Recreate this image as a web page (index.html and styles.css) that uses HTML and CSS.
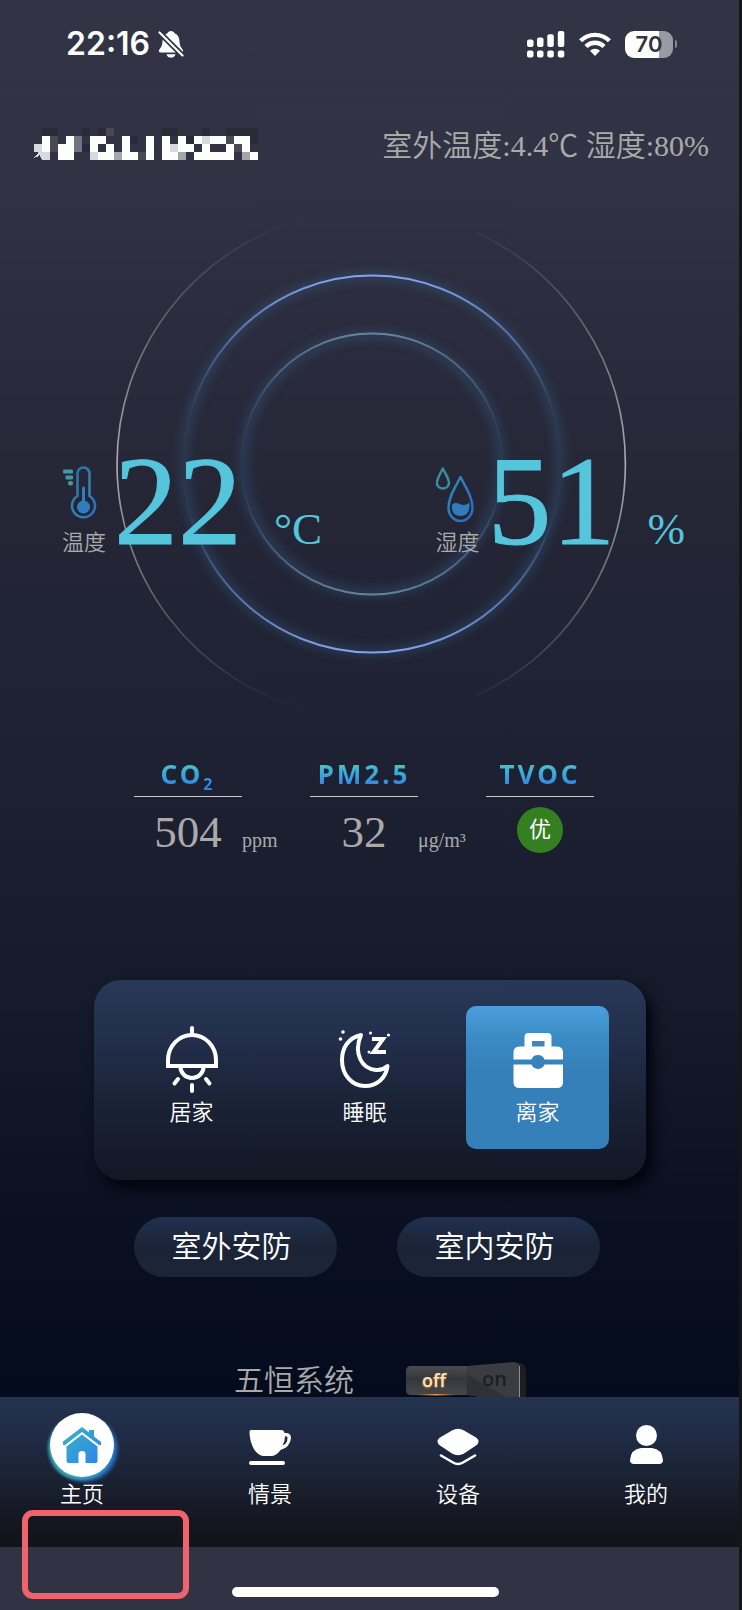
FILE: index.html
```html
<!DOCTYPE html>
<html lang="zh-CN">
<head>
<meta charset="utf-8">
<meta name="viewport" content="width=device-width, initial-scale=1">
<title>主页</title>
<link rel="stylesheet" href="styles.css">
</head>
<body>
<div class="app">
  <div class="status">
    <div class="status-left">
      <span class="clock">22:16</span>
      <svg class="bell" viewBox="0 0 26 28" aria-hidden="true">
        <path fill="#fff" d="M13 1C11 1 10 2 9.500 3.200C6.500 4.200 4.800 7 4.600 10.500C4.400 15 3.500 17 1.500 19.200C.2 20.800.8 22.500 2.800 22.500H23C25.200 22.500 25.700 20.800 24.400 19.200C22.500 17 21.600 15 21.400 10.500C21.200 7 19.500 4.200 16.500 3.200C16 2 15 1 13 1ZM8.500 24.200H17.500C17 26.500 15.300 27.600 13 27.600C10.700 27.600 9 26.500 8.500 24.200Z"/>
        <path stroke="#313344" stroke-width="5.500" d="M0 1L26 27"/>
        <path stroke="#fff" stroke-width="2.200" stroke-linecap="round" d="M1.500 2.500L24.500 25.500"/>
      </svg>
    </div>
    <div class="status-right">
      <svg class="signal" viewBox="0 0 38 28" fill="#fff" aria-hidden="true">
        <rect x="0" y="9.500" width="6.500" height="7.500" rx="2"/><rect x="10" y="7.500" width="6.500" height="9.500" rx="2"/><rect x="20.300" y="4.300" width="6.500" height="12.700" rx="2"/><rect x="30.800" y="1" width="6.500" height="16" rx="2"/>
        <rect x="0" y="20.500" width="6.500" height="7" rx="2"/><rect x="10" y="20.500" width="6.500" height="7" rx="2"/><rect x="20.300" y="20.500" width="6.500" height="7" rx="2"/><rect x="30.800" y="20.500" width="6.500" height="7" rx="2"/>
      </svg>
      <svg class="wifi" viewBox="0 0 32 26" aria-hidden="true">
        <g fill="none" stroke="#fff" stroke-width="4.400"><path d="M1.600 9.800A20.500 20.500 0 0 1 30.400 9.800"/><path d="M7 15.500A12.800 12.800 0 0 1 25 15.500"/></g>
        <path fill="#fff" d="M11 19.800A7 7 0 0 1 21 19.800L16 25Z"/>
      </svg>
      <div class="battery"><span class="battery-cell">70</span><span class="battery-tip"></span></div>
    </div>
  </div>

  <header class="header">
    <svg class="name" viewBox="0 0 225 32" shape-rendering="crispEdges" aria-hidden="true">
      <g fill="#292c36"><path d="M9 0h16v8h-16zM49 0h8v8h-8zM65 0h8v8h-8zM129 0h16v8h-16zM169 0h8v8h-8zM193 0h32v8h-32zM217 8h8v8h-8zM153 8h8v8h-8z"/></g>
      <g fill="#292942"><path d="M49 16h8v8h-8zM97 8h8v8h-8z"/></g>
      <g fill="#4a4853"><path d="M17 8h8v8h-8zM17 16h8v8h-8zM73 0h8v8h-8zM105 24h8v8h-8zM193 8h8v8h-8zM201 16h8v8h-8z"/></g>
      <g fill="#747380"><path d="M41 8h8v8h-8zM41 16h8v8h-8z"/></g>
      <g fill="#a5a5aa"><path d="M81 24h8v8h-8zM145 24h8v8h-8zM209 24h8v8h-8z"/></g>
      <g fill="#d8d9df"><path d="M1 16h8v8h-8zM5 24h12v8h-8zM0 30L6 24V28ZM57 24h8v8h-8zM137 16h8v8h-8zM169 8h8v8h-8z"/></g>
      <g fill="#fdfdfb"><path d="M9 8h8v16h-8zM33 8h8v8h-8zM25 16h16v16h-16zM57 8h16v8h-16zM57 16h8v8h-8zM73 16h8v8h-8zM65 24h16v8h-16zM89 8h8v16h-8zM89 24h16v8h-16zM113 8h8v24h-8zM129 8h8v24h-8zM137 24h8v8h-8zM145 8h8v8h-8zM145 16h16v8h-16zM161 8h8v8h-8zM169 16h8v8h-8zM177 8h16v8h-16zM161 24h40v8h-40zM193 16h8v8h-8zM201 8h16v8h-16zM209 16h8v8h-8zM217 24h8v8h-8z"/></g>
    </svg>
    <p class="outdoor">室外温度:4.4℃ 湿度:80%</p>
  </header>

  <main class="main">
    <section class="hero">
      <svg class="rings" viewBox="-256 -256 512 512" aria-hidden="true">
        <defs>
          <linearGradient id="outerLeft" gradientUnits="userSpaceOnUse" x1="0" y1="-246" x2="0" y2="246">
            <stop offset="0" stop-color="#aaa" stop-opacity="0"/><stop offset=".5" stop-color="#aeaeb2"/><stop offset="1" stop-color="#aaa" stop-opacity="0"/>
          </linearGradient>
          <linearGradient id="middle" x1="0" y1="0" x2="0" y2="1">
            <stop offset="0" stop-color="#86a2ea"/><stop offset=".2" stop-color="#5578b4" stop-opacity=".7"/><stop offset=".36" stop-color="#38577c" stop-opacity=".2"/><stop offset=".5" stop-color="#38577c" stop-opacity="0"/><stop offset=".64" stop-color="#38577c" stop-opacity=".2"/><stop offset=".8" stop-color="#5578b4" stop-opacity=".7"/><stop offset="1" stop-color="#86a2ea"/>
          </linearGradient>
          <linearGradient id="inner" x1="0" y1="0" x2="0" y2="1">
            <stop offset="0" stop-color="#66839e"/><stop offset=".35" stop-color="#38577c" stop-opacity=".3"/><stop offset=".5" stop-color="#38577c" stop-opacity="0"/><stop offset=".65" stop-color="#38577c" stop-opacity=".3"/><stop offset="1" stop-color="#66839e"/>
          </linearGradient>
          <filter id="glow" x="-20%" y="-20%" width="140%" height="140%"><feGaussianBlur stdDeviation="5"/></filter>
        </defs>
        <g fill="none">
          <g stroke="#36618a" stroke-width="10" opacity=".34" filter="url(#glow)"><circle r="188"/><circle r="129"/></g>
          <path stroke="url(#outerLeft)" stroke-width="1.600" d="M-68 -245A254 254 0 0 0 -68 245M105 -231A254 254 0 0 1 105 231"/>
          <circle r="188.500" stroke="url(#middle)" stroke-width="2"/>
          <circle r="130.500" stroke="url(#inner)" stroke-width="2"/>
        </g>
      </svg>
      <div class="readings">
        <div class="reading">
          <div class="reading-kind">
            <svg class="kind-icon" viewBox="0 0 46 57" aria-hidden="true">
              <defs><linearGradient id="thermo" x1="0" y1="0" x2="1" y2="1"><stop offset="0" stop-color="#2e6ba6"/><stop offset=".6" stop-color="#2f86b8"/><stop offset="1" stop-color="#2d69c4"/></linearGradient></defs>
              <g fill="#3f9aa5"><rect x="1" y="3.500" width="10" height="4" rx="1.200"/><rect x="3.500" y="9.500" width="7.500" height="4" rx="1.200"/><rect x="6" y="15" width="5" height="4.500" rx="2"/></g>
              <path fill="none" stroke="url(#thermo)" stroke-width="2.500" d="M15.500 30V7.500A6 6 0 0 1 27.500 7.500V30A11.500 11.500 0 1 1 15.500 30Z"/>
              <path fill="none" stroke="#2f7dba" stroke-width="3" stroke-linecap="round" d="M21.500 22V40"/>
              <circle cx="21.500" cy="41" r="6.500" fill="#2f7dba"/>
            </svg>
            <span class="kind-label">温度</span>
          </div>
          <p class="reading-value"><span class="digits">22</span><span class="unit">°C</span></p>
        </div>
        <div class="reading">
          <div class="reading-kind">
            <svg class="kind-icon" viewBox="0 0 46 57" aria-hidden="true">
              <defs><linearGradient id="drop" x1="0" y1="0" x2="1" y2="1"><stop offset="0" stop-color="#2f8bb5"/><stop offset="1" stop-color="#2b67c8"/></linearGradient></defs>
              <g fill="none" stroke-width="2.500" stroke-linejoin="round"><path stroke="#388e9e" d="M6.800 2.500C9.500 8 13 12.500 13 17.500A6.200 6.200 0 0 1 .8 17.500C.8 12.500 4.200 8 6.800 2.500Z"/><path stroke="url(#drop)" d="M24.500 11C30 22 36.500 31 36.500 42A12 13 0 0 1 12.500 42C12.500 31 19 22 24.500 11Z"/></g>
              <path fill="#2f7dbb" d="M16 39C19 35.500 22.500 37.500 25 38.500C28 39.500 30.500 39 33.200 36.500C34.500 45 31 50 24.500 50C18.500 50 15.500 46 16 39Z"/>
            </svg>
            <span class="kind-label">湿度</span>
          </div>
          <p class="reading-value"><span class="digits">51</span><span class="unit">%</span></p>
        </div>
      </div>
    </section>

    <section class="metrics">
      <div class="metric">
        <h2 class="metric-name"><span class="metric-text">CO<sub>2</sub></span></h2>
        <span class="metric-value">504</span><span class="metric-unit">ppm</span>
      </div>
      <div class="metric">
        <h2 class="metric-name"><span class="metric-text">PM2.5</span></h2>
        <span class="metric-value">32</span><span class="metric-unit">μg/m³</span>
      </div>
      <div class="metric">
        <h2 class="metric-name"><span class="metric-text">TVOC</span></h2>
        <span class="grade">优</span>
      </div>
    </section>

    <section class="modes">
      <button class="mode" type="button">
        <svg class="mode-icon" viewBox="0 0 60 70" aria-hidden="true">
          <g fill="none" stroke="#fff" stroke-width="4"><path stroke-linecap="round" d="M30 3V9"/><path d="M6 41V35A24 25 0 0 1 54 35V41Z"/><path d="M18.500 42A11.500 11 0 0 0 41.500 42"/><path stroke-linecap="round" d="M16 54L12.500 58.500M44 54L47.500 58.500M30 60V66"/></g>
        </svg>
        <span>居家</span>
      </button>
      <button class="mode" type="button">
        <svg class="mode-icon" viewBox="0 0 60 70" aria-hidden="true">
          <path fill="none" stroke="#fff" stroke-width="4" stroke-linejoin="round" d="M26 10C13 13 7 23 7 35C7 50 17 61 30 61C42 61 51 53 52.500 41C49 44 45 45.500 41 45C27 44 18 29 26 10Z"/>
          <path fill="none" stroke="#fff" stroke-width="4" stroke-linejoin="miter" d="M37 14H48L38.500 27H51"/>
          <g fill="#fff"><circle cx="8" cy="7" r="1.800"/><circle cx="5.500" cy="14" r="1.800"/><circle cx="35.500" cy="8" r="1.500"/><circle cx="53.500" cy="10" r="1.600"/><circle cx="34" cy="27" r="1.500"/></g>
        </svg>
        <span>睡眠</span>
      </button>
      <button class="mode mode-active" type="button" aria-pressed="true">
        <svg class="mode-icon" viewBox="0 0 60 70" aria-hidden="true">
          <path fill="#fff" fill-rule="evenodd" d="M11.500 21.500H16.500V12Q16.500 8 20.500 8H39.500Q43.500 8 43.500 12V21.500H49Q55 21.500 55 27.500V34.500H36.500A7 7 0 0 0 23.500 34.500H5.500V27.500Q5.500 21.500 11.500 21.500ZM24 16V21.500H36.500V16Z"/>
          <path fill="#fff" d="M5.500 39.500H23.500A7 7 0 0 0 36.500 39.500H55V57Q55 63 49 63H11.500Q5.500 63 5.500 57Z"/>
        </svg>
        <span>离家</span>
      </button>
    </section>

    <section class="guards">
      <button class="guard" type="button">室外安防</button>
      <button class="guard" type="button">室内安防</button>
    </section>

    <section class="system">
      <label class="system-name" for="system-switch">五恒系统</label>
      <span class="switch">
        <input class="switch-input" type="checkbox" role="switch" id="system-switch">
        <svg class="switch-body" viewBox="0 0 122 44" aria-hidden="true">
          <defs>
            <linearGradient id="offSide" x1="0" y1="0" x2="0" y2="1"><stop offset="0" stop-color="#494b50"/><stop offset=".45" stop-color="#35373c"/><stop offset="1" stop-color="#45474b"/></linearGradient>
            <linearGradient id="ember"><stop offset="0" stop-color="#c77a34" stop-opacity="0"/><stop offset=".5" stop-color="#e89a50"/><stop offset="1" stop-color="#c77a34" stop-opacity="0"/></linearGradient>
          </defs>
          <path fill="#1c1e22" d="M110 1H116Q121 3 121 10V38H110Z"/>
          <path fill="url(#offSide)" d="M6 4H62V33H6Q1 33 1 28V9Q1 4 6 4Z"/>
          <path fill="#3b3c42" d="M62 4L108 0Q115 0 115 6V40H108L62 33Z"/>
          <path fill="#303137" d="M62 12L106 38L62 33Z"/>
          <path stroke="#8a909a" stroke-width="1" d="M114.500 4V36"/>
          <path fill="url(#ember)" d="M10 32H52V33.500H10Z"/>
        </svg>
        <span class="switch-off">off</span>
        <span class="switch-on">on</span>
      </span>
    </section>
  </main>

  <nav class="tabs">
    <a class="tab" href="#home" aria-current="page">
      <span class="tab-icon tab-disc">
        <svg viewBox="0 0 40 40" aria-hidden="true">
          <defs><linearGradient id="house" x1="0" y1="0" x2="1" y2="1"><stop offset="0" stop-color="#39b5c3"/><stop offset="1" stop-color="#2f83ec"/></linearGradient></defs>
          <path fill="url(#house)" d="M20 2L27 7.500V5H32V11.500L39 17V20H37L20 7L3 20H1V16.500ZM20 9.500L35.500 21.500V36Q35.500 38 33.500 38H23.500V29Q23.500 26 20 26Q16.500 26 16.500 29V38H6.500Q4.500 38 4.500 36V21.500Z"/>
        </svg>
      </span>
      <span>主页</span>
    </a>
    <a class="tab" href="#scene">
      <span class="tab-icon"><svg viewBox="0 0 44 44" aria-hidden="true">
        <path fill="#fff" fill-rule="evenodd" d="M3 7H33Q36 7 36.500 10Q43 9.500 43 15Q42 24.500 32.500 27C30 30.500 27 33 24 33H15C7 32 1.500 20 1.500 8.500Q1.500 7 3 7ZM37 13.500Q37 18.500 34.500 22.500Q39.500 20.500 39.500 15Q39.500 12.500 37 13.500Z"/>
        <rect x="1" y="38" width="36" height="4" rx="2" fill="#fff"/></svg></span>
      <span>情景</span>
    </a>
    <a class="tab" href="#devices">
      <span class="tab-icon"><svg viewBox="0 0 44 44" aria-hidden="true">
        <path fill="#fff" d="M16 7.500Q22 4 28 7.500L40 14.500Q45 18.500 40 22.500L28 30.500Q22 34 16 30.500L4 22.500Q-1 18.500 4 14.500Z"/>
        <path fill="none" stroke="#fff" stroke-width="2.600" stroke-linecap="round" d="M5 32.500L17 39.500Q22 42.500 27 39.500L39 32.500"/></svg></span>
      <span>设备</span>
    </a>
    <a class="tab" href="#mine">
      <span class="tab-icon"><svg viewBox="0 0 44 44" aria-hidden="true">
        <circle cx="22.500" cy="12.500" r="10.500" fill="#fff"/>
        <path fill="#fff" d="M17 25H28Q38 26 39 37Q39 41 35 41H10Q6 41 6 37Q7 26 17 25Z"/></svg></span>
      <span>我的</span>
    </a>
  </nav>
  <div class="home-area"><span class="home-indicator"></span></div>
  <span class="marker"></span>
</div>
</body>
</html>
```
FILE: styles.css
```css
* {
  box-sizing: border-box;
}

body {
  margin: 0;
  background: #151619;
  color: #fff;
  font-family: "Liberation Serif", "Noto Sans CJK SC", serif;
}

p,
h2 {
  margin: 0;
}

svg {
  display: block;
}

button {
  border: 0;
  padding: 0;
  color: inherit;
  font: inherit;
}

.app {
  position: relative;
  display: flex;
  flex-direction: column;
  min-height: 100vh;
  margin-right: 3px;
  background: linear-gradient(#323445 0, #313344 170px, #2b2c3d 320px, #242636 520px, #1c2031 800px, #151b2a 1000px, #0b1122 1200px, #040b1c 1397px);
}

.status {
  display: flex;
  align-items: center;
  justify-content: space-between;
  height: 88px;
  padding: 0 62px 0 66px;
  font-family: Inter, sans-serif;
  font-weight: 600;
}

.status-left,
.status-right {
  display: flex;
  align-items: center;
}

.status-left {
  gap: 8px;
}

.status-right {
  gap: 14px;
}

.clock {
  font-size: 32px;
  line-height: 40px;
}

.bell {
  width: 26px;
  height: 28px;
}

.signal {
  width: 38px;
  height: 28px;
}

.wifi {
  width: 32px;
  height: 26px;
}

.battery {
  display: flex;
  align-items: center;
  gap: 2px;
}

.battery-cell {
  width: 48px;
  border-radius: 9px;
  background: linear-gradient(90deg, #fff 70%, #999aa3 70%);
  color: #313344;
  font-size: 22px;
  line-height: 27px;
  text-align: center;
}

.battery-tip {
  width: 2px;
  height: 8px;
  border-radius: 0 2px 2px 0;
  background: #85868f;
}

.header {
  display: flex;
  align-items: center;
  justify-content: space-between;
  height: 60px;
  margin-top: 26px;
  padding: 0 30px 0 33px;
}

.name {
  width: 225px;
  height: 32px;
}

.outdoor {
  padding-top: 4px;
  color: #aaa;
  font-size: 30px;
  font-weight: 350;
  line-height: 40px;
}

.main {
  flex: 1;
  display: flex;
  flex-direction: column;
}

.hero {
  display: grid;
  justify-items: center;
  margin-top: 34px;
}

.rings,
.readings {
  grid-area: 1 / 1;
}

.rings {
  width: 512px;
  height: 512px;
  margin-left: 4px;
}

.readings {
  display: flex;
  justify-content: space-between;
  align-items: flex-start;
  width: 100%;
  padding: 239px 54px 0 62px;
}

.reading {
  display: flex;
  align-items: flex-end;
  gap: 6px;
}

.reading-kind {
  display: flex;
  flex-direction: column;
  gap: 8px;
  width: 46px;
}

.kind-icon {
  width: 46px;
  height: 57px;
}

.kind-label {
  color: #aaa;
  font-size: 22px;
  font-weight: 350;
  line-height: 24px;
}

.reading-value {
  display: flex;
  align-items: baseline;
  gap: 32px;
  color: #55c5dc;
}

.digits {
  font-size: 128px;
  line-height: 108px;
  -webkit-text-stroke: 1px #55c5dc;
}

.unit {
  font-size: 45px;
  line-height: 48px;
}

.metrics {
  display: grid;
  grid-template-columns: repeat(3, 108px);
  gap: 68px;
  margin: 36px 0 0 134px;
}

.metric {
  display: grid;
  grid-template-columns: 108px 68px;
  grid-template-rows: auto 50px;
  align-items: baseline;
  row-gap: 10px;
  margin-right: -68px;
}

.metric-name {
  grid-column: 1;
  display: flex;
  justify-content: center;
  height: 41px;
  border-bottom: 1px solid #c8cad0;
}

.metric-text {
  background: linear-gradient(#43bfcd 25%, #2f7fe8 80%);
  background-clip: text;
  color: transparent;
  font: 700 26px/36px "Noto Sans", sans-serif;
  letter-spacing: 3px;
  white-space: nowrap;
}

.metric-text sub {
  font-size: 16px;
  line-height: 0;
}

.metric-value {
  grid-column: 1;
  color: #aaa;
  font-size: 45px;
  line-height: 50px;
  text-align: center;
}

.metric-unit {
  color: #aaa;
  font-size: 20px;
  line-height: 24px;
}

.grade {
  grid-area: 2 / 1;
  align-self: start;
  justify-self: center;
  width: 46px;
  border-radius: 50%;
  background: #348020;
  font-size: 22px;
  line-height: 46px;
  text-align: center;
}

.modes {
  display: grid;
  grid-template-columns: repeat(3, 1fr);
  gap: 30px;
  margin: 123px 93px 0 94px;
  padding: 26px 37px 31px 26px;
  border-radius: 27px;
  background: linear-gradient(#283857, #222e4b 30%, #1a2337 60%, #121724);
  box-shadow: 6px 8px 14px #02040b;
}

.mode {
  display: flex;
  flex-direction: column;
  align-items: center;
  justify-content: center;
  gap: 4px;
  aspect-ratio: 1;
  padding-bottom: 3px;
  border-radius: 10px;
  background: none;
  font-size: 22px;
  font-weight: 350;
  line-height: 28px;
}

.mode-active {
  background: linear-gradient(#4b9fdb, #3b8bc5 22%, #3580b9 45%);
}

.mode-icon {
  width: 60px;
  height: 70px;
}

.guards {
  display: grid;
  grid-template-columns: 1fr 1fr;
  gap: 60px;
  margin: 37px 139px 0 134px;
}

.guard {
  height: 60px;
  padding: 0 8px 6px 0;
  border-radius: 30px;
  background: linear-gradient(#21304f, #1b2436 50%, #1a2537);
  font-size: 30px;
  font-weight: 350;
}

.system {
  display: flex;
  align-items: flex-start;
  gap: 51px;
  height: 36px;
  margin-top: 84px;
  padding-left: 234px;
  overflow: hidden;
}

.system-name {
  color: #aaa;
  font-size: 30px;
  font-weight: 350;
  line-height: 40px;
}

.switch {
  position: relative;
  display: block;
  width: 122px;
  height: 44px;
  margin-top: 1px;
  font-family: "Open Sans", sans-serif;
  font-weight: 600;
  line-height: 24px;
}

.switch-input {
  position: absolute;
  inset: 0;
  width: 100%;
  height: 100%;
  margin: 0;
  opacity: 0;
}

.switch-body {
  width: 122px;
  height: 44px;
}

.switch-off,
.switch-on {
  position: absolute;
  pointer-events: none;
}

.switch-off {
  top: 6px;
  left: 17px;
  color: #fbe3bb;
  font-size: 18px;
  text-shadow: 0 1px 2px #d5792c;
}

.switch-on {
  top: 5px;
  left: 77px;
  color: #1d1e22;
  font-size: 20px;
}

.tabs {
  display: flex;
  justify-content: space-between;
  height: 150px;
  padding: 16px 61px 0 50px;
  background: linear-gradient(#24334f, #202b46 25%, #1a2231 55%, #15151f 85%, #13131a);
}

.tab {
  display: flex;
  flex-direction: column;
  align-items: center;
  gap: 4px;
  width: 64px;
  color: #fff;
  font-size: 22px;
  font-weight: 350;
  line-height: 28px;
  text-decoration: none;
}

.tab-icon {
  display: grid;
  place-items: center;
  width: 64px;
  height: 64px;
}

.tab-icon svg {
  width: 44px;
  height: 44px;
}

.tab-disc {
  border-radius: 50%;
  background: #fff;
  box-shadow: -2px 3px 3px #34a3ae, 3px 4px 4px #2b79d8;
}

.tab-disc svg {
  width: 40px;
  height: 40px;
}

.home-area {
  display: flex;
  align-items: flex-end;
  justify-content: center;
  height: 63px;
  padding: 0 9px 13px 0;
  background: #313344;
}

.home-indicator {
  width: 267px;
  height: 10px;
  border-radius: 5px;
  background: #fff;
}

.marker {
  position: absolute;
  bottom: 11px;
  left: 22px;
  width: 167px;
  height: 89px;
  border: 6px solid #ee636c;
  border-radius: 11px;
}
```
